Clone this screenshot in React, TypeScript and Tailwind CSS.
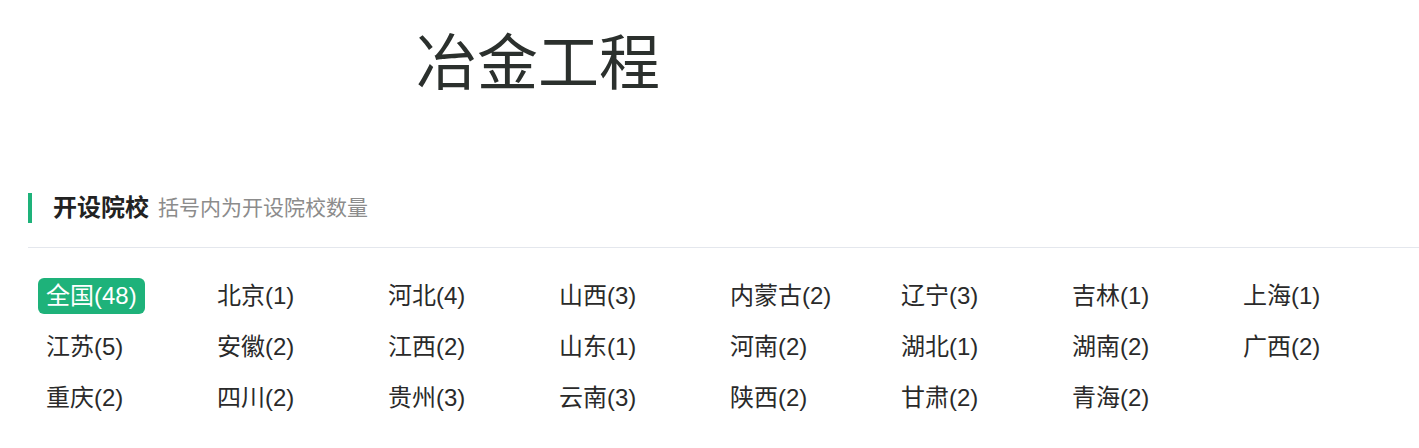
const provinces: [string, number][] = [
  ["全国", 48],
  ["北京", 1],
  ["河北", 4],
  ["山西", 3],
  ["内蒙古", 2],
  ["辽宁", 3],
  ["吉林", 1],
  ["上海", 1],
  ["江苏", 5],
  ["安徽", 2],
  ["江西", 2],
  ["山东", 1],
  ["河南", 2],
  ["湖北", 1],
  ["湖南", 2],
  ["广西", 2],
  ["重庆", 2],
  ["四川", 2],
  ["贵州", 3],
  ["云南", 3],
  ["陕西", 2],
  ["甘肃", 2],
  ["青海", 2],
];

export default function App() {
  return (
    <div
      className="w-[1419px] h-[448px] bg-white overflow-hidden"
      style={{ fontFamily: '"Liberation Sans", "Noto Sans CJK SC", sans-serif' }}
    >
      <h1 className="pl-[416px] pt-[29px] text-[61px] leading-[70px] text-[#2b302d] font-normal">
        冶金工程
      </h1>

      <div className="mt-[94px] ml-[28px]">
        <div className="flex items-center h-[30px] border-l-4 border-[#1eb27a] pl-[21px]">
          <span className="text-[24px] font-bold text-[#222]">开设院校</span>
          <span className="ml-[9px] text-[21px] text-[#8c8c8c]">括号内为开设院校数量</span>
        </div>
        <div className="mt-[24px] border-t border-[#e4e7ed]" />

        <div className="mt-[30px] ml-[10px] w-[1368px] grid grid-cols-8 gap-y-[15px]">
          {provinces.map(([name, count], i) => (
            <div key={name} className="flex">
              <span
                className={
                  i === 0
                    ? "h-[36px] leading-[36px] px-[8px] rounded-[6px] bg-[#1eb27a] text-white text-[24px]"
                    : "h-[36px] leading-[36px] px-[8px] text-[#2a2a2a] text-[24px]"
                }
              >
                {name}({count})
              </span>
            </div>
          ))}
        </div>
      </div>
    </div>
  );
}
